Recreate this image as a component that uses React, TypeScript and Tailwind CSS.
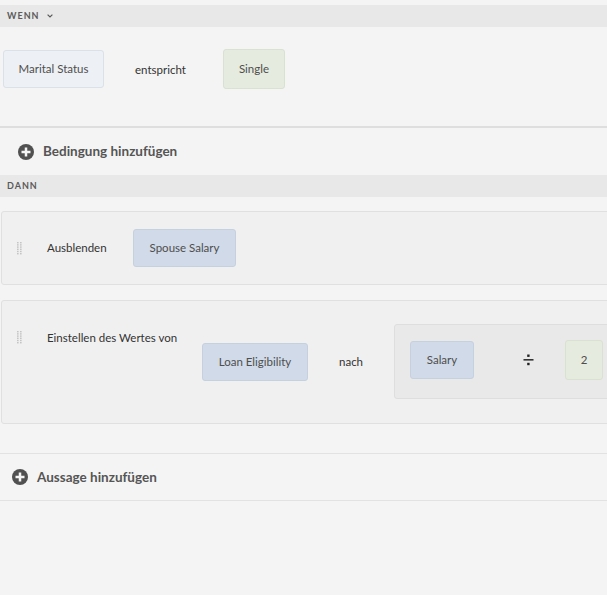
import React from "react";

function PlusCircle() {
  return (
    <svg width="16" height="16" viewBox="0 0 16 16" className="shrink-0">
      <circle cx="8" cy="8" r="8" fill="#505050" />
      <rect x="3.5" y="6.75" width="9" height="2.5" fill="#f4f4f4" />
      <rect x="6.75" y="3.5" width="2.5" height="9" fill="#f4f4f4" />
    </svg>
  );
}

function DragHandle() {
  const dots = [];
  for (let r = 0; r < 6; r++) {
    for (let c = 0; c < 2; c++) {
      dots.push(<rect key={`${r}-${c}`} x={c * 3} y={r * 2.2} width="1.6" height="1.4" fill="#c4c4c4" />);
    }
  }
  return (
    <svg width="5" height="13" viewBox="0 0 5 13" className="shrink-0">
      {dots}
    </svg>
  );
}

function DivideIcon() {
  return (
    <svg width="11" height="12" viewBox="0 0 11 12" className="shrink-0">
      <rect x="4.2" y="0.5" width="2.4" height="2.4" fill="#222" />
      <rect x="0.5" y="5" width="10" height="1.6" fill="#333" />
      <rect x="4.2" y="8.8" width="2.4" height="2.4" fill="#222" />
    </svg>
  );
}

function Chip({ label, tone, className }: { label: string; tone: "blue" | "light" | "green"; className: string }) {
  const tones = {
    blue: "bg-[#d0dae8] border-[#c6d1e0]",
    light: "bg-[#edf0f4] border-[#dbe1e8]",
    green: "bg-[#e6ebdf] border-[#d9e1d0]",
  };
  return (
    <div className={`flex items-center justify-center rounded-[3px] border text-[11.5px] text-[#4e4e4e] shrink-0 ${tones[tone]} ${className}`}>
      {label}
    </div>
  );
}

function SectionBar({ label, chevron }: { label: string; chevron?: boolean }) {
  return (
    <div className="flex h-[22px] items-center gap-[7px] bg-[#e8e8e8] pl-[7px] text-[9px] font-bold tracking-[1px] text-[#5a5a5a]">
      <span>{label}</span>
      {chevron && (
        <svg width="6" height="4" viewBox="0 0 6 4">
          <path d="M0.6 0.6 L3 3 L5.4 0.6" stroke="#5a5a5a" strokeWidth="1.2" fill="none" />
        </svg>
      )}
    </div>
  );
}

function AddRow({ label, indent }: { label: string; indent: string }) {
  return (
    <div className={`flex items-center gap-[9px] ${indent} text-[13.5px] font-bold text-[#555]`}>
      <PlusCircle />
      <span>{label}</span>
    </div>
  );
}

export default function App() {
  return (
    <div className="h-[595px] w-[607px] overflow-hidden bg-[#f4f4f4] pt-[5px] font-['Lato',sans-serif] text-[#333]">
      <div className="h-[23px]">
        <SectionBar label="WENN" chevron />
      </div>

      <div className="flex h-[98px] items-start pl-[3px] pt-[21px]">
        <Chip label="Marital Status" tone="light" className="mt-[1px] h-[38px] w-[101px]" />
        <span className="ml-[31px] mt-[12px] w-[88px] text-[11.5px] text-[#333]">entspricht</span>
        <Chip label="Single" tone="green" className="h-[40px] w-[62px]" />
      </div>

      <div className="h-[2px] bg-[#dedede]" />

      <div className="flex h-[47px] items-center">
        <AddRow label="Bedingung hinzufügen" indent="pl-[18px]" />
      </div>

      <SectionBar label="DANN" />

      <div className="flex flex-col gap-[15px] pl-[1px] pt-[14px]">
        <div className="-mr-[10px] flex h-[74px] items-center rounded-[3px] border border-[#e0e0e0] bg-[#f0f0f0] pl-[15px]">
          <DragHandle />
          <span className="ml-[25px] w-[86px] text-[11.5px]">Ausblenden</span>
          <Chip label="Spouse Salary" tone="blue" className="h-[38px] w-[103px]" />
        </div>

        <div className="-mr-[10px] flex h-[124px] items-start rounded-[3px] border border-[#e0e0e0] bg-[#f0f0f0] pl-[15px]">
          <div className="flex items-center pt-[28px]">
            <DragHandle />
            <span className="ml-[25px] w-[155px] text-[11.5px]">Einstellen des Wertes von</span>
          </div>
          <div className="flex items-center self-stretch">
            <Chip label="Loan Eligibility" tone="blue" className="h-[38px] w-[106px]" />
            <span className="ml-[31px] w-[55px] text-[11.5px]">nach</span>
            <div className="-mt-[2px] flex h-[75px] w-[230px] items-center rounded-[3px] border border-[#dedede] bg-[#e9e9e9] pl-[15px]">
              <Chip label="Salary" tone="blue" className="-mt-[2px] h-[38px] w-[64px]" />
              <div className="ml-[49px] -mt-[2px]">
                <DivideIcon />
              </div>
              <Chip label="2" tone="green" className="-mt-[2px] ml-[31px] h-[40px] w-[38px]" />
            </div>
          </div>
        </div>
      </div>

      <div className="mt-[29px] h-[1px] bg-[#e2e2e2]" />
      <div className="flex h-[46px] items-center">
        <AddRow label="Aussage hinzufügen" indent="pl-[12px]" />
      </div>
      <div className="h-[1px] bg-[#e2e2e2]" />
    </div>
  );
}
